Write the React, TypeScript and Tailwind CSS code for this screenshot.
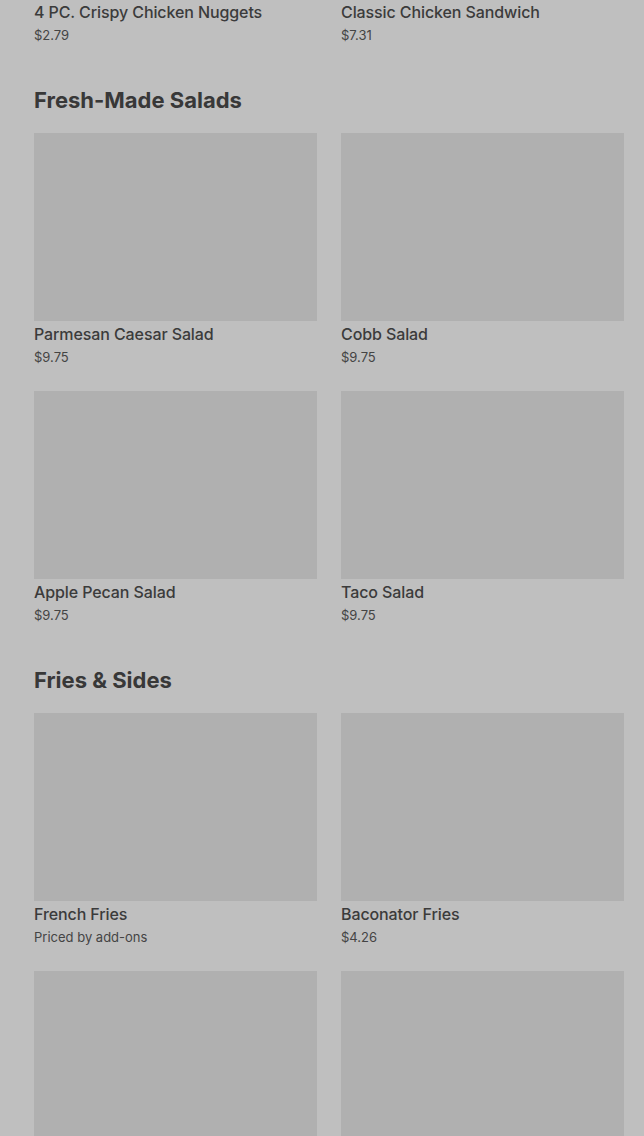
import React from 'react';

type Item = { name?: string; price?: string };

const sections: { title?: string; items: Item[] }[] = [
  {
    items: [
      { name: '4 PC. Crispy Chicken Nuggets', price: '$2.79' },
      { name: 'Classic Chicken Sandwich', price: '$7.31' },
    ],
  },
  {
    title: 'Fresh-Made Salads',
    items: [
      { name: 'Parmesan Caesar Salad', price: '$9.75' },
      { name: 'Cobb Salad', price: '$9.75' },
      { name: 'Apple Pecan Salad', price: '$9.75' },
      { name: 'Taco Salad', price: '$9.75' },
    ],
  },
  {
    title: 'Fries & Sides',
    items: [
      { name: 'French Fries', price: 'Priced by add-ons' },
      { name: 'Baconator Fries', price: '$4.26' },
      {},
      {},
    ],
  },
];

const MenuCard: React.FC<{ item: Item }> = ({ item }) => (
  <div className="flex flex-col">
    <div className="h-[188px] w-full bg-[#b0b0b0]" />
    {item.name && (
      <>
        <div className="mt-[1px] text-[16px] leading-[24px] font-medium text-[#3b3b3b] tracking-[-0.1px]">
          {item.name}
        </div>
        <div className="mt-[1px] text-[13px] leading-[20px] text-[#444]">{item.price}</div>
      </>
    )}
  </div>
);

export default function App() {
  return (
    <div
      className="h-[1136px] overflow-hidden bg-[#bfbfbf]"
      style={{ fontFamily: 'Inter, "Noto Sans", sans-serif' }}
    >
      <div className="-mt-[189px] pl-[34px] pr-[20px] flex flex-col gap-[41px]">
        {sections.map((s, i) => (
          <section key={i}>
            {s.title && (
              <h2 className="text-[22px] leading-[28px] font-bold text-[#383838] mb-[19px]">
                {s.title}
              </h2>
            )}
            <div className="grid grid-cols-2 gap-x-6 gap-y-6">
              {s.items.map((it, j) => (
                <MenuCard key={j} item={it} />
              ))}
            </div>
          </section>
        ))}
      </div>
    </div>
  );
}
